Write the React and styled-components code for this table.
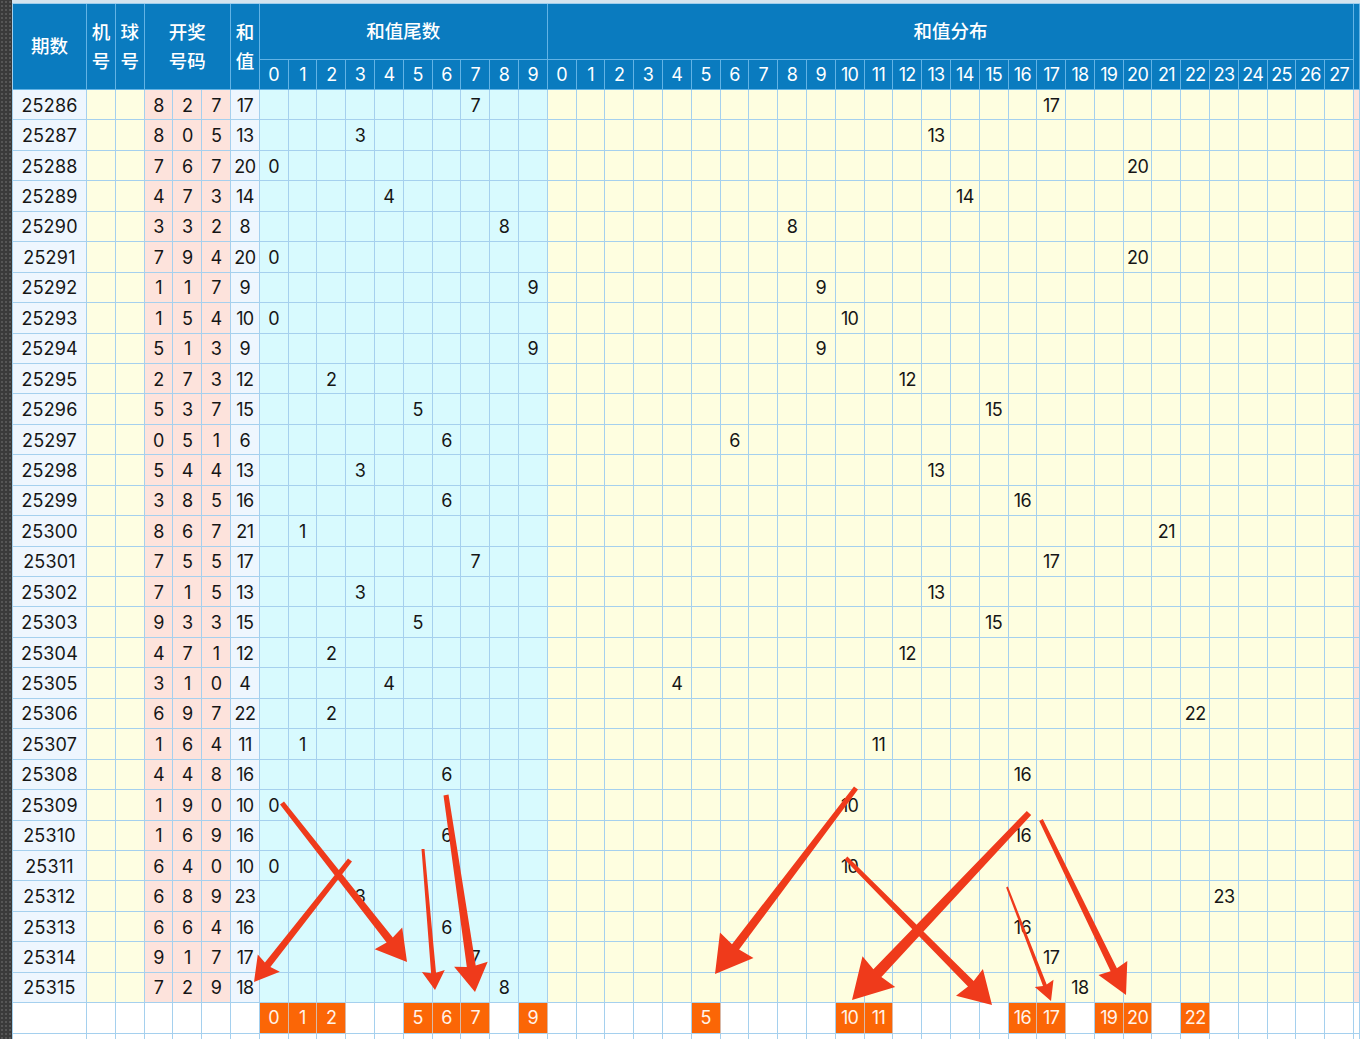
import React from 'react';
import styled, { createGlobalStyle } from 'styled-components';

const GlobalStyle = createGlobalStyle`
  html, body { margin: 0; padding: 0; background: #ffffff; overflow: hidden; }
  body { font-family: Inter, "Noto Sans CJK SC", sans-serif; }
  * { box-sizing: border-box; }
`;

const Page = styled.div`
  position: relative;
  display: flex;
  width: 1360px;
  height: 1039px;
  overflow: hidden;
  background: #ffffff;
`;

const Rail = styled.div`
  flex: none;
  width: 12px;
  background-color: #3a3a3a;
  background-image: radial-gradient(#565656 0.8px, transparent 1.1px);
  background-size: 4px 4px;
`;

const Sheet = styled.div`
  flex: 1;
  min-width: 0;
  padding-top: 3px;
  background: #d4e4ef;
`;

const Grid = styled.div`
  display: grid;
  grid-template-columns: 74px repeat(44, 28.8px) 1fr;
  grid-template-rows: 56px 30px repeat(30, 30.45px) 30.5px 30px;
  border-left: 1px solid #a3cfec;
  border-top: 1px solid #9fcdec;
  background: #ffffff;
`;

const HeadCell = styled.div`
  grid-row: span ${(p) => p.$rows || 1};
  grid-column: span ${(p) => p.$cols || 1};
  display: flex;
  align-items: center;
  justify-content: center;
  text-align: center;
  background: #0a7bbf;
  color: #ffffff;
  border-right: 1px solid #63b3e5;
  border-bottom: 1px solid #63b3e5;
  font-size: ${(p) => (p.$num ? '18px' : '18.5px')};
  font-weight: ${(p) => (p.$num ? 400 : 500)};
  line-height: 29px;
  letter-spacing: ${(p) => (p.$num ? '-0.7px' : '0')};
  white-space: nowrap;
  overflow: hidden;
`;

const palette = {
  issue: '#eef6fe',
  yellow: '#fefee2',
  pink: '#fde3dc',
  sum: '#eef6fe',
  cyan: '#d8fafe',
  dist: '#fefee0',
  blank: '#ffffff',
};

const Cell = styled.div`
  display: flex;
  align-items: center;
  justify-content: center;
  padding-top: 1px;
  background: ${(p) => palette[p.$kind]};
  border-right: 1px solid #a5d0ee;
  border-bottom: 1px solid #a5d0ee;
  color: #161616;
  font-size: 18px;
  letter-spacing: ${(p) => (p.$kind === 'issue' ? '0.2px' : '-0.6px')};
  white-space: nowrap;
  overflow: hidden;
`;

const Mark = styled.div`
  display: flex;
  align-items: center;
  justify-content: center;
  background: ${(p) => (p.$on ? '#fb6606' : '#ffffff')};
  color: #fff3ea;
  border-right: 1px solid ${(p) => (p.$on ? '#d9b9a8' : '#a5d0ee')};
  border-bottom: 1px solid #a5d0ee;
  font-size: 18px;
  letter-spacing: -0.6px;
  white-space: nowrap;
`;

const Overlay = styled.svg`
  position: absolute;
  left: 0;
  top: 0;
  width: 1360px;
  height: 1039px;
  pointer-events: none;
`;

const rows = [
  ['25286', [8, 2, 7]],
  ['25287', [8, 0, 5]],
  ['25288', [7, 6, 7]],
  ['25289', [4, 7, 3]],
  ['25290', [3, 3, 2]],
  ['25291', [7, 9, 4]],
  ['25292', [1, 1, 7]],
  ['25293', [1, 5, 4]],
  ['25294', [5, 1, 3]],
  ['25295', [2, 7, 3]],
  ['25296', [5, 3, 7]],
  ['25297', [0, 5, 1]],
  ['25298', [5, 4, 4]],
  ['25299', [3, 8, 5]],
  ['25300', [8, 6, 7]],
  ['25301', [7, 5, 5]],
  ['25302', [7, 1, 5]],
  ['25303', [9, 3, 3]],
  ['25304', [4, 7, 1]],
  ['25305', [3, 1, 0]],
  ['25306', [6, 9, 7]],
  ['25307', [1, 6, 4]],
  ['25308', [4, 4, 8]],
  ['25309', [1, 9, 0]],
  ['25310', [1, 6, 9]],
  ['25311', [6, 4, 0]],
  ['25312', [6, 8, 9]],
  ['25313', [6, 6, 4]],
  ['25314', [9, 1, 7]],
  ['25315', [7, 2, 9]],
];

const TAILS = Array.from({ length: 10 }, (_, i) => i);
const DIST = Array.from({ length: 28 }, (_, i) => i);
const HOT_TAIL = [0, 1, 2, 5, 6, 7, 9];
const HOT_DIST = [5, 10, 11, 16, 17, 19, 20, 22];

const arrows = [
  { x1: 350, y1: 860, x2: 254, y2: 982, w0: 5, w1: 7, hl: 24, hw: 28 },
  { x1: 282, y1: 803, x2: 407, y2: 962, w0: 5, w1: 8, hl: 30, hw: 35 },
  { x1: 423, y1: 849, x2: 435, y2: 990, w0: 3, w1: 5, hl: 19, hw: 23 },
  { x1: 446, y1: 795, x2: 475, y2: 992, w0: 5, w1: 9, hl: 28, hw: 34 },
  { x1: 856, y1: 788, x2: 715, y2: 974, w0: 5, w1: 9, hl: 36, hw: 42 },
  { x1: 1029, y1: 813, x2: 852, y2: 1000, w0: 6, w1: 11, hl: 39, hw: 45 },
  { x1: 846, y1: 858, x2: 992, y2: 1005, w0: 4, w1: 8, hl: 32, hw: 38 },
  { x1: 1007, y1: 887, x2: 1051, y2: 1001, w0: 2, w1: 4, hl: 19, hw: 20 },
  { x1: 1041, y1: 820, x2: 1126, y2: 995, w0: 4, w1: 7, hl: 30, hw: 32 },
];

function arrowPoints({ x1, y1, x2, y2, w0, w1, hl, hw }) {
  const dx = x2 - x1;
  const dy = y2 - y1;
  const L = Math.hypot(dx, dy);
  const ux = dx / L;
  const uy = dy / L;
  const nx = -uy;
  const ny = ux;
  const bx = x2 - ux * (hl - 2);
  const by = y2 - uy * (hl - 2);
  const hx = x2 - ux * hl;
  const hy = y2 - uy * hl;
  const pts = [
    [x1 + (nx * w0) / 2, y1 + (ny * w0) / 2],
    [bx + (nx * w1) / 2, by + (ny * w1) / 2],
    [hx + (nx * hw) / 2, hy + (ny * hw) / 2],
    [x2, y2],
    [hx - (nx * hw) / 2, hy - (ny * hw) / 2],
    [bx - (nx * w1) / 2, by - (ny * w1) / 2],
    [x1 - (nx * w0) / 2, y1 - (ny * w0) / 2],
  ];
  return pts.map((p) => p.map((v) => v.toFixed(1)).join(',')).join(' ');
}

function DataRow({ issue, balls }) {
  const sum = balls[0] + balls[1] + balls[2];
  const tail = sum % 10;
  return (
    <>
      <Cell $kind="issue">{issue}</Cell>
      <Cell $kind="yellow" />
      <Cell $kind="yellow" />
      {balls.map((b, i) => (
        <Cell key={i} $kind="pink">{b}</Cell>
      ))}
      <Cell $kind="sum">{sum}</Cell>
      {TAILS.map((t) => (
        <Cell key={'t' + t} $kind="cyan">{t === tail ? t : ''}</Cell>
      ))}
      {DIST.map((d) => (
        <Cell key={'d' + d} $kind="dist">{d === sum ? d : ''}</Cell>
      ))}
      <Cell $kind="pink" />
    </>
  );
}

export default function App() {
  return (
    <>
      <GlobalStyle />
      <Page>
        <Rail />
        <Sheet>
          <Grid>
            <HeadCell $rows={2}>期数</HeadCell>
            <HeadCell $rows={2}>机<br />号</HeadCell>
            <HeadCell $rows={2}>球<br />号</HeadCell>
            <HeadCell $rows={2} $cols={3}>开奖<br />号码</HeadCell>
            <HeadCell $rows={2}>和<br />值</HeadCell>
            <HeadCell $cols={10}>和值尾数</HeadCell>
            <HeadCell $cols={28}>和值分布</HeadCell>
            <HeadCell $rows={2} />
            {TAILS.map((t) => (
              <HeadCell key={'ht' + t} $num>{t}</HeadCell>
            ))}
            {DIST.map((d) => (
              <HeadCell key={'hd' + d} $num>{d}</HeadCell>
            ))}

            {rows.map(([issue, balls]) => (
              <DataRow key={issue} issue={issue} balls={balls} />
            ))}

            {Array.from({ length: 7 }, (_, i) => (
              <Mark key={'sl' + i} />
            ))}
            {TAILS.map((t) => (
              <Mark key={'st' + t} $on={HOT_TAIL.includes(t)}>
                {HOT_TAIL.includes(t) ? t : ''}
              </Mark>
            ))}
            {DIST.map((d) => (
              <Mark key={'sd' + d} $on={HOT_DIST.includes(d)}>
                {HOT_DIST.includes(d) ? d : ''}
              </Mark>
            ))}
            <Mark />

            {Array.from({ length: 46 }, (_, i) => (
              <Mark key={'e' + i} />
            ))}
          </Grid>
        </Sheet>
        <Overlay viewBox="0 0 1360 1039">
          {arrows.map((a, i) => (
            <polygon key={i} points={arrowPoints(a)} fill="#ef3a1b" strokeLinejoin="round" />
          ))}
        </Overlay>
      </Page>
    </>
  );
}
